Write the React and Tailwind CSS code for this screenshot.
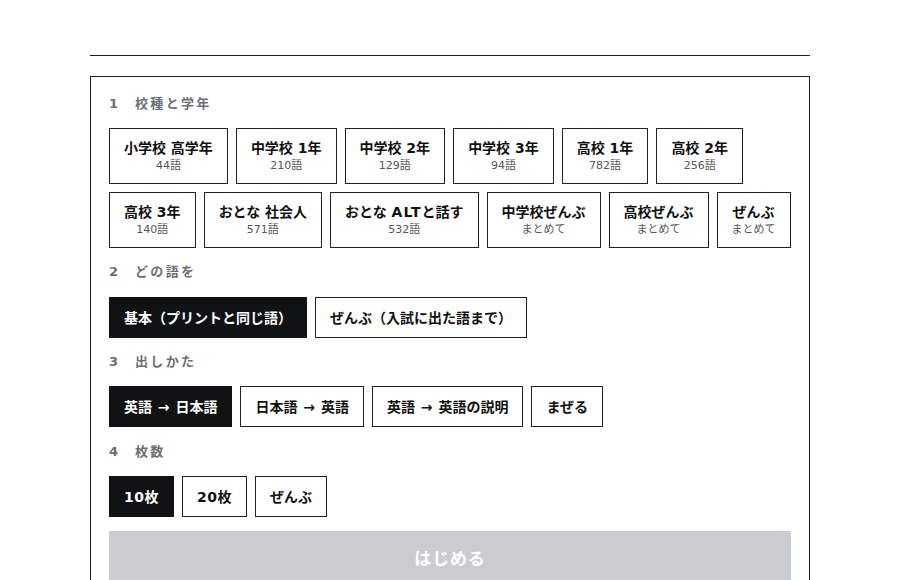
import { useState } from 'react';

const GRADES = [
  { label: '小学校 高学年', sub: '44語' },
  { label: '中学校 1年', sub: '210語' },
  { label: '中学校 2年', sub: '129語' },
  { label: '中学校 3年', sub: '94語' },
  { label: '高校 1年', sub: '782語' },
  { label: '高校 2年', sub: '256語' },
  { label: '高校 3年', sub: '140語' },
  { label: 'おとな 社会人', sub: '571語' },
  { label: <>おとな <span className="tracking-[1px]">ALT</span>と話す</>, sub: '532語' },
  { label: '中学校ぜんぶ', sub: 'まとめて' },
  { label: '高校ぜんぶ', sub: 'まとめて' },
  { label: 'ぜんぶ', sub: 'まとめて' },
];

const SCOPES = ['基本（プリントと同じ語）', 'ぜんぶ（入試に出た語まで）'];
const MODES = ['英語 → 日本語', '日本語 → 英語', '英語 → 英語の説明', 'まぜる'];
const COUNTS = [
  { label: '10枚', digits: true },
  { label: '20枚', digits: true },
  { label: 'ぜんぶ', digits: false },
];

function Heading({ n, children }) {
  return (
    <div className="flex items-center h-5 text-[13px] font-bold text-[#6b7078] tracking-[0.18em]">
      <span className="w-[26px]">{n}</span>
      <span>{children}</span>
    </div>
  );
}

function Choice({ active, onClick, children }) {
  return (
    <button
      onClick={onClick}
      className={`h-[41px] px-[14px] border text-[14px] font-bold leading-5 flex items-center [word-spacing:1px] ${
        active ? 'bg-[#111214] border-[#111214] text-white' : 'bg-white border-[#222] text-[#111]'
      }`}
    >
      {children}
    </button>
  );
}

export default function App() {
  const [grade, setGrade] = useState(null);
  const [scope, setScope] = useState(0);
  const [mode, setMode] = useState(0);
  const [count, setCount] = useState(0);

  return (
    <div className="min-h-screen bg-white" style={{ fontFamily: '"DejaVu Sans", "Noto Sans CJK JP", sans-serif' }}>
      <div className="w-[720px] mx-auto">
        <div className="h-[56px] border-b border-[#222]" />
        <div className="mt-5 border border-[#222] px-[18px] pt-[17px] pb-6">
          <Heading n="1">校種と学年</Heading>
          <div className="mt-[14px] flex flex-wrap gap-2">
            {GRADES.map((g, i) => (
              <button
                key={i}
                onClick={() => setGrade(i)}
                className={`px-[14px] py-[9px] border flex flex-col items-center ${
                  grade === i ? 'bg-[#111214] border-[#111214] text-white' : 'bg-white border-[#222] text-[#111]'
                }`}
              >
                <span className="text-[14px] font-bold leading-5">{g.label}</span>
                <span className="text-[11px] leading-4 text-[#555]">{g.sub}</span>
              </button>
            ))}
          </div>

          <div className="mt-[14px]">
            <Heading n="2">どの語を</Heading>
          </div>
          <div className="mt-[15px] flex gap-2">
            {SCOPES.map((s, i) => (
              <Choice key={s} active={scope === i} onClick={() => setScope(i)}>{s}</Choice>
            ))}
          </div>

          <div className="mt-[14px]">
            <Heading n="3">出しかた</Heading>
          </div>
          <div className="mt-[14px] flex gap-2">
            {MODES.map((m, i) => (
              <Choice key={m} active={mode === i} onClick={() => setMode(i)}>{m}</Choice>
            ))}
          </div>

          <div className="mt-[15px]">
            <Heading n="4">枚数</Heading>
          </div>
          <div className="mt-[14px] flex gap-2">
            {COUNTS.map((c, i) => (
              <Choice key={c.label} active={count === i} onClick={() => setCount(i)}>
                <span className={c.digits ? 'tracking-[0.5px]' : ''}>{c.label}</span>
              </Choice>
            ))}
          </div>

          <button className="mt-[14px] w-full h-[54px] pt-[3px] bg-[#c9ccd1] text-white text-[17px] font-bold tracking-[0.05em]">
            はじめる
          </button>
        </div>
      </div>
    </div>
  );
}
